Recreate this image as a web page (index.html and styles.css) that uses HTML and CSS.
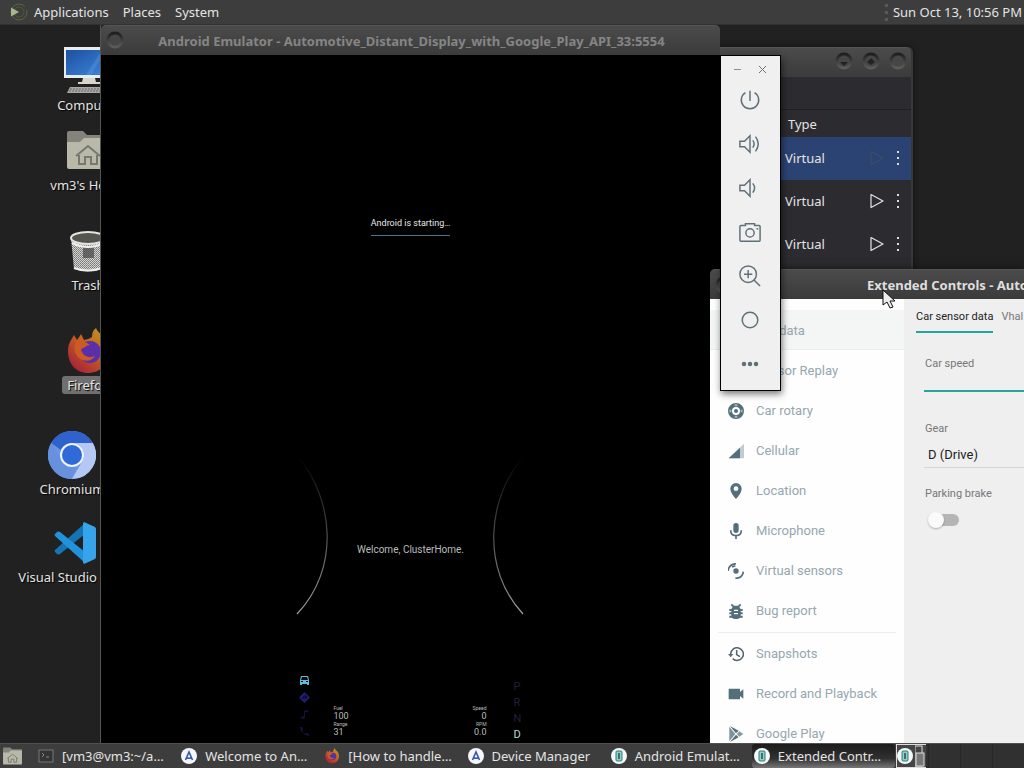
FILE: index.html
```html
<!DOCTYPE html>
<html lang="en">
<head>
<meta charset="utf-8">
<title>Desktop</title>
<link rel="stylesheet" href="styles.css">
</head>
<body>
<svg class="defs" aria-hidden="true">
  <defs>
    <linearGradient id="screenBlue" x1="0" y1="0" x2="1" y2="1"><stop offset="0" stop-color="#1d50a0"/><stop offset="1" stop-color="#3f86dc"/></linearGradient>
    <linearGradient id="arcFade" x1="0" y1="0" x2="0" y2="1"><stop offset="0" stop-color="#000"/><stop offset=".3" stop-color="#303030"/><stop offset="1" stop-color="#a09f9c"/></linearGradient>
    <linearGradient id="foxBody" x1="1" y1="0" x2="0.2" y2="1"><stop offset="0" stop-color="#b8a32a"/><stop offset=".45" stop-color="#c8641f"/><stop offset="1" stop-color="#a41f3c"/></linearGradient>
    <linearGradient id="ring" x1="0" y1="0" x2="0" y2="1"><stop offset="0" stop-color="#1f1f1f"/><stop offset="1" stop-color="#5c5c5c"/></linearGradient>
    <pattern id="mesh" width="2" height="2" patternUnits="userSpaceOnUse"><rect width="2" height="2" fill="#d2d2d0"/><rect width="1" height="1" fill="#777"/><rect x="1" y="1" width="1" height="1" fill="#8c8c8c"/></pattern>
    <symbol id="fox" viewBox="0 0 48 48">
      <path d="M4 24C4 16 8 12 10 8l3 5c2-3 3-4 4-6l3 6c3-1 5-1 8-3 0-4 1-7 4-9 2 6 13 10 13 24 0 12-9 21-21 21S4 37 4 24z" fill="url(#foxBody)"/>
      <circle cx="26" cy="25" r="11" fill="#5a2fa8"/>
      <path d="M13 13c5 0 9 2 13 5-4 0-5 3-9 4 1 7 8 10 14 7-4 7-15 6-19-2-2-5-2-9 1-14z" fill="#cc5b22"/>
    </symbol>
    <symbol id="studio" viewBox="0 0 16 16"><circle cx="8" cy="8" r="8" fill="#f4f6fb"/><path d="M4.500 12 8 4l3.500 8M5.500 9.500q2.500 1.500 5 0" fill="none" stroke="#3457a8" stroke-width="1.600"/></symbol>
    <symbol id="emu" viewBox="0 0 16 16"><circle cx="8" cy="8" r="8" fill="#f6f8f8"/><rect x="5" y="3" width="6" height="10" rx="1" fill="#8fd0c8" stroke="#2d7f7a"/><path d="M8 5v6" stroke="#37474f" stroke-width="1.500"/></symbol>
    <symbol id="folder" viewBox="0 0 42 40"><path d="M0 3q0-2 2-2h14l4 4h22v10H0z" fill="#84847d"/><path d="M0 12h13l4-4h25v29q0 2-2 2H2q-2 0-2-2z" fill="#b9b9aa"/><path d="M9 26l12-10 12 10M12 25v9h6v-7h6v7h6v-9" fill="none" stroke="#77776c" stroke-width="2"/></symbol>
    <symbol id="play" viewBox="0 0 16 16"><path d="M2 1.500 14 8 2 14.500z" fill="none" stroke="currentColor" stroke-width="1.200" stroke-linejoin="round"/></symbol>
    <symbol id="winbtn" viewBox="0 0 20 20"><circle cx="10" cy="10" r="7" fill="#464646" stroke="url(#ring)" stroke-width="3"/></symbol>
  </defs>
</svg>

<header class="panel panel-top">
  <svg class="menu-logo" viewBox="0 0 18 18"><circle cx="9" cy="9" r="8" fill="none" stroke="#586738" stroke-dasharray="20 4"/><circle cx="9" cy="9" r="5" fill="none" stroke="#4d5b35"/><path d="M1 4.500 9 9l-8 4.500z" fill="#a9b68b"/></svg>
  <nav class="menus">
    <button>Applications</button><button>Places</button><button>System</button>
  </nav>
  <span class="grip"></span>
  <time>Sun Oct 13, 10:56 PM</time>
</header>

<main class="desktop">
  <div class="launcher at-computer">
    <svg width="48" height="48" viewBox="0 0 48 48"><rect x="0" y="0" width="48" height="31" fill="#e8ecee"/><rect x="2" y="3" width="44" height="25" fill="url(#screenBlue)"/><path d="M22 28 38 3h4L27 28z" fill="#5c9ae4" opacity=".4"/><path d="M19 31h12l1 4h4v2H14v-2h4z" fill="#d8d6c8"/><path d="M6 40h38l3 6H3z" fill="#a9aaa7"/><path d="M6 42h36M5 44h38" stroke="#686966" stroke-dasharray="2 1"/></svg>
    <span>Computer</span>
  </div>
  <div class="launcher at-home">
    <svg width="42" height="40"><use href="#folder"/></svg>
    <span>vm3's Home</span>
  </div>
  <div class="launcher at-trash">
    <svg width="36" height="42" viewBox="0 0 36 42"><path d="M1 7 4 38q14 5 28 0l3-31z" fill="url(#mesh)"/><path d="M13 16h11v11H13z" fill="#444" opacity=".7"/><ellipse cx="18" cy="7" rx="17" ry="6" fill="#55554f" stroke="#e4e4e2" stroke-width="2"/><path d="M2 12q16 8 32 0" fill="none" stroke="#f0f0ee" stroke-width="2"/><path d="M4 37q14 5 28 0" fill="none" stroke="#eee" stroke-width="2"/></svg>
    <span>Trash</span>
  </div>
  <div class="launcher at-firefox selected">
    <svg width="48" height="48"><use href="#fox"/></svg>
    <span>Firefox</span>
  </div>
  <div class="launcher at-chromium">
    <svg width="48" height="48" viewBox="0 0 48 48"><circle cx="24" cy="24" r="24" fill="#6a94e4"/><path d="M3.200 12A24 24 0 0 1 44.800 12H24A12 12 0 0 0 13 19z" fill="#2f62cc"/><path d="M3.200 12 13.600 30A12 12 0 0 0 28 35L23 48A24 24 0 0 1 3.200 12z" fill="#6791df"/><path d="M44.800 12A24 24 0 0 1 24 48L34.400 30A12 12 0 0 0 24 12z" fill="#b4c8f3"/><circle cx="24" cy="24" r="12" fill="#eef3fd"/><circle cx="24" cy="24" r="10" fill="#3069d8"/></svg>
    <span>Chromium</span>
  </div>
  <div class="launcher at-code">
    <svg width="42" height="42" viewBox="0 0 42 42"><path d="M1 28 31 1v11L6 32q-2 1-3 0l-2-2q-1-1 0-2z" fill="#1574b4"/><path d="M1 14 31 41V30L6 10q-2-1-3 0l-2 2q-1 1 0 2z" fill="#2193dc"/><path d="M30 0 41 5q1 1 1 2v28q0 1-1 2l-11 5q-1-1-1-2V2q0-1 1-2z" fill="#36a4ea"/></svg>
    <span>Visual Studio Code</span>
  </div>

  <section class="window device-manager">
    <div class="titlebar">
      <svg width="20" height="20"><use href="#winbtn"/><path d="M6 11h8l-4 4z" fill="#222"/></svg>
      <svg width="20" height="20"><use href="#winbtn"/><path d="M6 11l4-4 4 4-4 3z" fill="#222"/></svg>
      <svg width="20" height="20"><use href="#winbtn"/></svg>
    </div>
    <div class="dm-toolbar"></div>
    <table>
      <thead><tr><th>Type</th><th></th></tr></thead>
      <tbody>
        <tr class="active"><td>Virtual</td><td><div class="row-actions"><button class="dim" disabled aria-label="Run"><svg width="16" height="16"><use href="#play"/></svg></button><button aria-label="More"><i class="kebab"></i></button></div></td></tr>
        <tr><td>Virtual</td><td><div class="row-actions"><button aria-label="Run"><svg width="16" height="16"><use href="#play"/></svg></button><button aria-label="More"><i class="kebab"></i></button></div></td></tr>
        <tr><td>Virtual</td><td><div class="row-actions"><button aria-label="Run"><svg width="16" height="16"><use href="#play"/></svg></button><button aria-label="More"><i class="kebab"></i></button></div></td></tr>
      </tbody>
    </table>
  </section>

  <section class="window emulator">
    <div class="titlebar">
      <svg width="20" height="20"><use href="#winbtn"/></svg>
      <h2>Android Emulator - Automotive_Distant_Display_with_Google_Play_API_33:5554</h2>
    </div>
    <div class="screen">
      <p class="boot">Android is starting…</p>
      <div class="cluster">
        <svg width="34" height="164" viewBox="0 0 34 164"><path d="M2 4C38 46 44 116 1 161" fill="none" stroke="url(#arcFade)" stroke-width="1.200"/></svg>
        <p>Welcome, ClusterHome.</p>
        <svg width="34" height="164" viewBox="0 0 34 164"><path d="M32 4C-4 46-10 116 32 161" fill="none" stroke="url(#arcFade)" stroke-width="1.200"/></svg>
      </div>
      <div class="gauges">
        <div class="tabs">
          <svg width="11" height="11" viewBox="0 0 11 11"><path d="M1 10V5l1-4h7l1 4v5H8V9H3v1zM3 2 2 5h7L8 2zM2 6v1h2V6zm5 0v1h2V6z" fill="#5bbcdc" fill-rule="evenodd"/></svg>
          <svg width="11" height="11" viewBox="0 0 11 11"><path d="M5.500 0 11 5.500 5.500 11 0 5.500z" fill="#211d70"/><path d="M4 7V5h4M6 3l2 2-2 2" fill="none" stroke="#060614"/></svg>
          <svg width="11" height="11" viewBox="0 0 11 11"><path d="M5 10V2l4-1v2H6v6q-2 2-4 0 0-2 3-2" fill="#151238"/></svg>
          <svg width="11" height="11" viewBox="0 0 11 11"><path d="M1 1q1 8 9 9V8L7 7 6 8Q4 7 3 5l1-1-1-3z" fill="#181439"/></svg>
        </div>
        <dl><dt>Fuel</dt><dd>100</dd><dt>Range</dt><dd>31</dd></dl>
        <dl class="right"><dt>Speed</dt><dd>0</dd><dt>RPM</dt><dd>0.0</dd></dl>
        <ul class="gears"><li>P</li><li>R</li><li>N</li><li class="on">D</li></ul>
      </div>
    </div>
  </section>

  <section class="window extended">
    <div class="titlebar">
      <svg width="20" height="20"><use href="#winbtn"/></svg>
      <h2>Extended Controls - Automotive_Distant_Display_with_Google_Play_API_33:5554</h2>
    </div>
    <div class="ext-body">
      <nav class="side">
        <a href="#" class="current"><svg viewBox="0 0 24 24"><path d="M5 5h14l2 7v8h-3v-2H6v2H3v-8z"/></svg>Car data</a>
        <a href="#"><svg viewBox="0 0 24 24"><path d="M5 5h14l2 7v8h-3v-2H6v2H3v-8z"/></svg>Sensor Replay</a>
        <a href="#"><svg viewBox="0 0 24 24"><path fill-rule="evenodd" d="M12 0a12 12 0 1 0 0 24 12 12 0 0 0 0-24zm0 6a6 6 0 1 1 0 12 6 6 0 0 1 0-12z"/><path d="M10 2h4v3h-4zM10 19h4v3h-4zM2 10h3v4H2zM19 10h3v4h-3z" fill="#fff" opacity=".5"/><circle cx="12" cy="12" r="3"/></svg>Car rotary</a>
        <a href="#"><svg viewBox="0 0 24 24"><path d="M24 1v22H1z" opacity=".35"/><path d="M18 7v16H1z"/></svg>Cellular</a>
        <a href="#"><svg viewBox="0 0 24 24"><path fill-rule="evenodd" d="M12 0a8.500 8.500 0 0 0-8.500 8.500C3.500 15 12 24 12 24s8.500-9 8.500-15.500A8.500 8.500 0 0 0 12 0zm0 5a3.500 3.500 0 1 1 0 7 3.500 3.500 0 0 1 0-7z"/></svg>Location</a>
        <a href="#"><svg viewBox="0 0 24 24"><rect x="8" y="0" width="8" height="15" rx="4"/><path d="M4 11q0 8 8 8t8-8M12 18v6" fill="none" stroke="#546e7a" stroke-width="2.500"/></svg>Microphone</a>
        <a href="#"><svg viewBox="0 0 24 24"><circle cx="12" cy="12" r="4"/><path d="M0 12Q1 2 12 1M11 23q11 0 12-10M6 6l5-2" fill="none" stroke="#546e7a" stroke-width="2.500"/></svg>Virtual sensors</a>
        <a href="#"><svg viewBox="0 0 24 24"><path d="M7 6 4 3l2-2 3 3h6l3-3 2 2-3 3 2 3h3v3h-3v2h3v3h-3v2h3v3h-4q-6 5-12 0H2v-3h3v-2H2v-3h3v-2H2V9h3z"/><path d="M9 10h6v2H9zM9 15h6v2H9z" fill="#fff"/></svg>Bug report</a>
        <hr>
        <a href="#"><svg viewBox="0 0 24 24"><path d="M4 12a9.500 9.500 0 1 1 3 7M13 6v7l5 3" fill="none" stroke="#56646b" stroke-width="2.300"/><path d="M0 12h8l-4 5z"/></svg>Snapshots</a>
        <a href="#"><svg viewBox="0 0 24 24"><path d="M1 4h17v5l5-4v14l-5-4v5H1z"/></svg>Record and Playback</a>
        <a href="#"><svg viewBox="0 0 24 24"><path d="M2 1v22l9-11z" opacity=".75"/><path d="m3 0 13 7-4 4zM3 24l13-7-4-4z"/><path d="m17 8 6 4-6 4-4-4z" opacity=".7"/></svg>Google Play</a>
      </nav>
      <form class="car">
        <div class="car-tabs"><button type="button" class="on">Car sensor data</button><button type="button">Vhal properties</button></div>
        <div class="fields">
          <label for="speed">Car speed</label>
          <input id="speed" type="text">
          <label for="gear">Gear</label>
          <select id="gear"><option>D (Drive)</option></select>
          <label for="brake">Parking brake</label>
          <input id="brake" type="checkbox">
        </div>
      </form>
    </div>
  </section>

  <aside class="toolbar">
    <div class="tb-head"><button aria-label="Minimize"><svg width="9" height="9"><path d="M1 4.500h7" stroke="#8b9295"/></svg></button><button aria-label="Close"><svg width="9" height="9"><path d="m1 1 7 7m0-7-7 7" stroke="#69747a"/></svg></button></div>
    <button aria-label="Power"><svg viewBox="0 0 24 24"><path d="M12 2v11M7 4a9.500 9.500 0 1 0 10 0"/></svg></button>
    <button aria-label="Volume up"><svg viewBox="0 0 24 24"><path d="M1 9h5l6-6v18l-6-6H1zM15 8q3 4 0 8M18 4q6 8 0 16"/></svg></button>
    <button aria-label="Volume down"><svg viewBox="0 0 24 24"><path d="M1 9h5l6-6v18l-6-6H1zM15 7q4 5 0 10"/></svg></button>
    <button aria-label="Take screenshot"><svg viewBox="0 0 24 24"><path d="M7 5V3h10v2h5q1 0 1 1v15q0 1-1 1H2q-1 0-1-1V6q0-1 1-1z"/><circle cx="12" cy="13" r="4.500"/><path d="M19 8.500h2"/></svg></button>
    <button aria-label="Zoom"><svg viewBox="0 0 24 24"><circle cx="10" cy="10" r="9"/><path d="m16 16 7 7M5.500 10h9M10 5.500v9"/></svg></button>
    <button aria-label="Home"><svg viewBox="0 0 24 24"><circle cx="12" cy="12" r="8.500"/></svg></button>
    <button aria-label="More"><svg class="dots" viewBox="0 0 24 24"><circle cx="4" cy="12" r="3"/><circle cx="12" cy="12" r="3"/><circle cx="20" cy="12" r="3"/></svg></button>
  </aside>

  <svg class="pointer" width="14" height="20" viewBox="0 0 14 20"><path d="M1 1v15l4-3 3 6 3-1-3-6h5z" fill="#eee" stroke="#111"/></svg>
</main>

<footer class="panel panel-bottom">
  <button class="show-desktop" aria-label="Files"><svg width="19" height="18"><use href="#folder"/></svg></button>
  <div class="tasks">
    <button><svg viewBox="0 0 16 16"><rect x="1" y="2" width="14" height="12" fill="#343434" stroke="#777"/><path d="m4 5 2 2-2 2m4 0h3" fill="none" stroke="#888"/></svg><span>[vm3@vm3:~/a…</span></button>
    <button><svg><use href="#studio"/></svg><span>Welcome to An…</span></button>
    <button><svg><use href="#fox"/></svg><span>[How to handle…</span></button>
    <button><svg><use href="#studio"/></svg><span>Device Manager</span></button>
    <button><svg><use href="#emu"/></svg><span>Android Emulat…</span></button>
    <button class="active"><svg><use href="#emu"/></svg><span>Extended Contr…</span></button>
  </div>
  <div class="pager">
    <div class="here"><svg width="16" height="16"><use href="#emu"/></svg><svg width="10" height="22" viewBox="0 0 10 22"><rect x="0" y="1" width="7" height="20" fill="none" stroke="#ddd"/><rect x="1" y="8" width="8" height="13" fill="#777" stroke="#ddd"/></svg></div>
    <div></div><div></div><div></div>
  </div>
</footer>
</body>
</html>
```
FILE: styles.css
```css
* { box-sizing: border-box; }
body {
  margin: 0;
  min-height: 100vh;
  display: grid;
  grid-template-rows: 25px 1fr 25px;
  background: #212121;
  color: #e4e4e4;
  font: 13px/18px "Noto Sans", sans-serif;
  overflow: hidden;
}
button { border: 0; padding: 0; background: none; color: inherit; font: inherit; }
svg { display: block; flex: none; }
h2, p, dl, dd, ul { margin: 0; padding: 0; font-weight: normal; }
ul { list-style: none; }
.defs { position: absolute; width: 0; height: 0; }

.panel { display: flex; align-items: center; background: #3d3d3d; min-width: 0; }
.panel-top { padding: 0 2px 0 10px; border-bottom: 1px solid #323232; }
.menu-logo { width: 18px; height: 18px; }
.menus { display: flex; gap: 14px; margin-left: 6px; flex: 1; }
.grip { height: 17px; border-left: 3px dotted #595959; margin-right: 5px; }

.desktop { position: relative; overflow: hidden; }
.launcher { position: absolute; width: 120px; display: flex; flex-direction: column; align-items: center; gap: 1px; white-space: nowrap; }
.launcher span { padding: 0 5px; border-radius: 3px; text-shadow: 1px 1px 1px #000; }
.launcher.selected span { background: #707070; }
.at-computer { left: 28px; top: 22px; }
.at-home { left: 28px; top: 105px; gap: 6px; }
.at-trash { left: 28px; top: 206px; gap: 3px; }
.at-firefox { left: 28px; top: 302px; }
.at-chromium { left: 12px; top: 406px; }
.at-code { left: 15px; top: 497px; gap: 4px; }

.window { position: absolute; }
.titlebar {
  display: flex;
  align-items: center;
  height: 30px;
  padding: 0 4px;
  border-radius: 5px 5px 0 0;
  border-top: 1px solid #555;
  background: linear-gradient(#4b4b4b, #3b3b3b);
  white-space: nowrap;
  overflow: hidden;
}
.titlebar h2 { font-size: 13px; font-weight: bold; line-height: 18px; }

.device-manager { left: 640px; top: 22px; width: 273px; height: 260px; background: #2b2b30; border-right: 2px solid #383838; border-radius: 5px 5px 0 0; box-shadow: 0 0 6px #111; }
.device-manager .titlebar { justify-content: flex-end; gap: 7px; padding: 0 3px 3px; }
.dm-toolbar { height: 33px; border-bottom: 1px solid #202024; }
.device-manager table { width: 100%; border-collapse: collapse; }
.device-manager th { height: 27px; padding: 0 0 0 148px; text-align: left; font-weight: normal; }
.device-manager td { height: 43px; padding: 0 0 2px 145px; }
.device-manager th + th, .device-manager td + td { padding: 0 6px 2px 0; }
.device-manager .active { background: #2b4373; }
.row-actions { display: flex; justify-content: flex-end; gap: 8px; }
.row-actions button { width: 14px; display: grid; place-items: center; }
.dim { color: #3d4b68; }
.kebab { width: 2px; height: 14px; background: repeating-linear-gradient(#ddd 0 2px, transparent 2px 6px); }

.emulator { left: 100px; top: 0; width: 620px; bottom: 0; display: flex; flex-direction: column; border-left: 1px solid #555; }
.emulator .titlebar { padding: 0 4px 2px; }
.emulator .titlebar h2 { flex: 1; padding: 2px 18px 0 0; text-align: center; color: #858585; }
.screen { flex: 1; background: #000; display: flex; flex-direction: column; align-items: center; font-family: Roboto, sans-serif; color: #bbb; }
.boot { margin-top: 162px; padding-bottom: 6px; font-size: 9px; line-height: 12px; color: #e8e8e8; border-bottom: 1px solid #40798e; }
.cluster { display: flex; justify-content: space-between; align-items: center; width: 230px; margin-top: 217px; }
.cluster p { font-size: 10px; line-height: 16px; padding-top: 30px; white-space: nowrap; }
.gauges { display: flex; align-items: flex-end; width: 224px; margin-top: 58px; }
.tabs { display: grid; gap: 6px; width: 35px; margin-bottom: 6px; }
.gauges dl { font-size: 9px; line-height: 10px; flex: 1; margin-bottom: 6px; }
.gauges dt { font-size: 5px; line-height: 6px; }
.gauges .right { text-align: right; margin-right: 27px; }
.gears { font-size: 11px; line-height: 16px; color: #20203a; width: 9px; }
.gears .on { color: #b9ddd5; }

.extended { left: 710px; top: 244px; right: 0; bottom: 0; display: flex; flex-direction: column; box-shadow: 0 0 8px #0008; }
.extended .titlebar { border-radius: 5px 0 0 0; }
.extended .titlebar h2 { padding-left: 133px; color: #dedede; }
.ext-body { flex: 1; min-height: 0; display: grid; grid-template-columns: 194px 1fr; overflow: hidden; font-family: Roboto, sans-serif; }
.side { background: #fefefe; padding-top: 11px; }
.side a { display: flex; align-items: center; gap: 12px; height: 40px; padding: 2px 0 0 18px; color: #96a7af; text-decoration: none; font-size: 13px; white-space: nowrap; }
.side svg { width: 16px; height: 16px; fill: #546e7a; }
.side .current { background: #f4f5f5; border-bottom: 1px solid #ececec; }
.side hr { margin: 2px 8px 0; border: 0; border-top: 1px solid #eee; }
.car { background: #efefef; min-width: 0; overflow: hidden; }
.car-tabs { display: flex; gap: 8px; padding: 7px 0 0 12px; white-space: nowrap; font-size: 11px; line-height: 22px; color: #777; }
.car-tabs button { padding-bottom: 3px; border-bottom: 2px solid transparent; }
.car-tabs .on { color: #222; border-color: #26a69a; }
.fields { display: flex; flex-direction: column; padding: 22px 0 0 20px; font-size: 11px; line-height: 18px; color: #777; }
.fields label { padding-left: 1px; }
.fields input[type="text"] { height: 19px; margin-bottom: 28px; border: 0; border-bottom: 2px solid #26a69a; background: none; border-radius: 0; }
.fields select { appearance: none; height: 30px; margin-bottom: 17px; padding: 3px 4px 0; border: 0; border-bottom: 1px solid #d6d6d6; border-radius: 0; background: none; color: #222; font: 13px Roboto, sans-serif; }
.fields input[type="checkbox"] { appearance: none; position: relative; width: 28px; height: 12px; margin: 11px 0 0 7px; border-radius: 6px; background: #b5b5b5; }
.fields input[type="checkbox"]::before { content: ""; position: absolute; left: -3px; top: -2px; width: 16px; height: 16px; border-radius: 50%; background: #fafafa; box-shadow: 0 1px 2px #0004; }

.toolbar { position: absolute; left: 720px; top: 30px; width: 61px; display: flex; flex-direction: column; align-items: center; padding: 0 2px 4px 0; border: 1px solid #000; background: #f0f0f0; box-shadow: 1px 3px 7px #0008; }
.toolbar > button { width: 44px; height: 44px; display: grid; place-items: center; }
.toolbar > button svg { width: 22px; height: 22px; fill: none; stroke: #5f7076; stroke-width: 1.6; }
.toolbar > button .dots { width: 18px; height: 18px; fill: #5f7076; stroke: none; }
.tb-head { display: flex; gap: 16px; height: 22px; padding-top: 4px; }
.pointer { position: absolute; left: 882px; top: 264px; }

.panel-bottom { border-top: 1px solid #505050; }
.show-desktop { padding-left: 3px; width: 36px; }
.tasks { flex: 1; display: grid; grid-template-columns: repeat(6, 1fr); min-width: 0; align-self: stretch; }
.tasks button { display: flex; align-items: center; gap: 8px; padding: 0 2px; white-space: nowrap; text-align: left; overflow: hidden; }
.tasks svg { width: 16px; height: 16px; }
.tasks .active { background: linear-gradient(#1c1c1c, #303030 60%, #777); border-radius: 3px; }
.pager { width: 128px; margin-left: 1px; display: grid; grid-template-columns: repeat(4, 1fr); height: 24px; background: #303030; }
.pager div { border-left: 1px solid #282828; }
.pager .here { display: flex; align-items: center; border: 1px solid #ddd; border-right: 0; width: 30px; gap: 2px; background: #454545; }
```
